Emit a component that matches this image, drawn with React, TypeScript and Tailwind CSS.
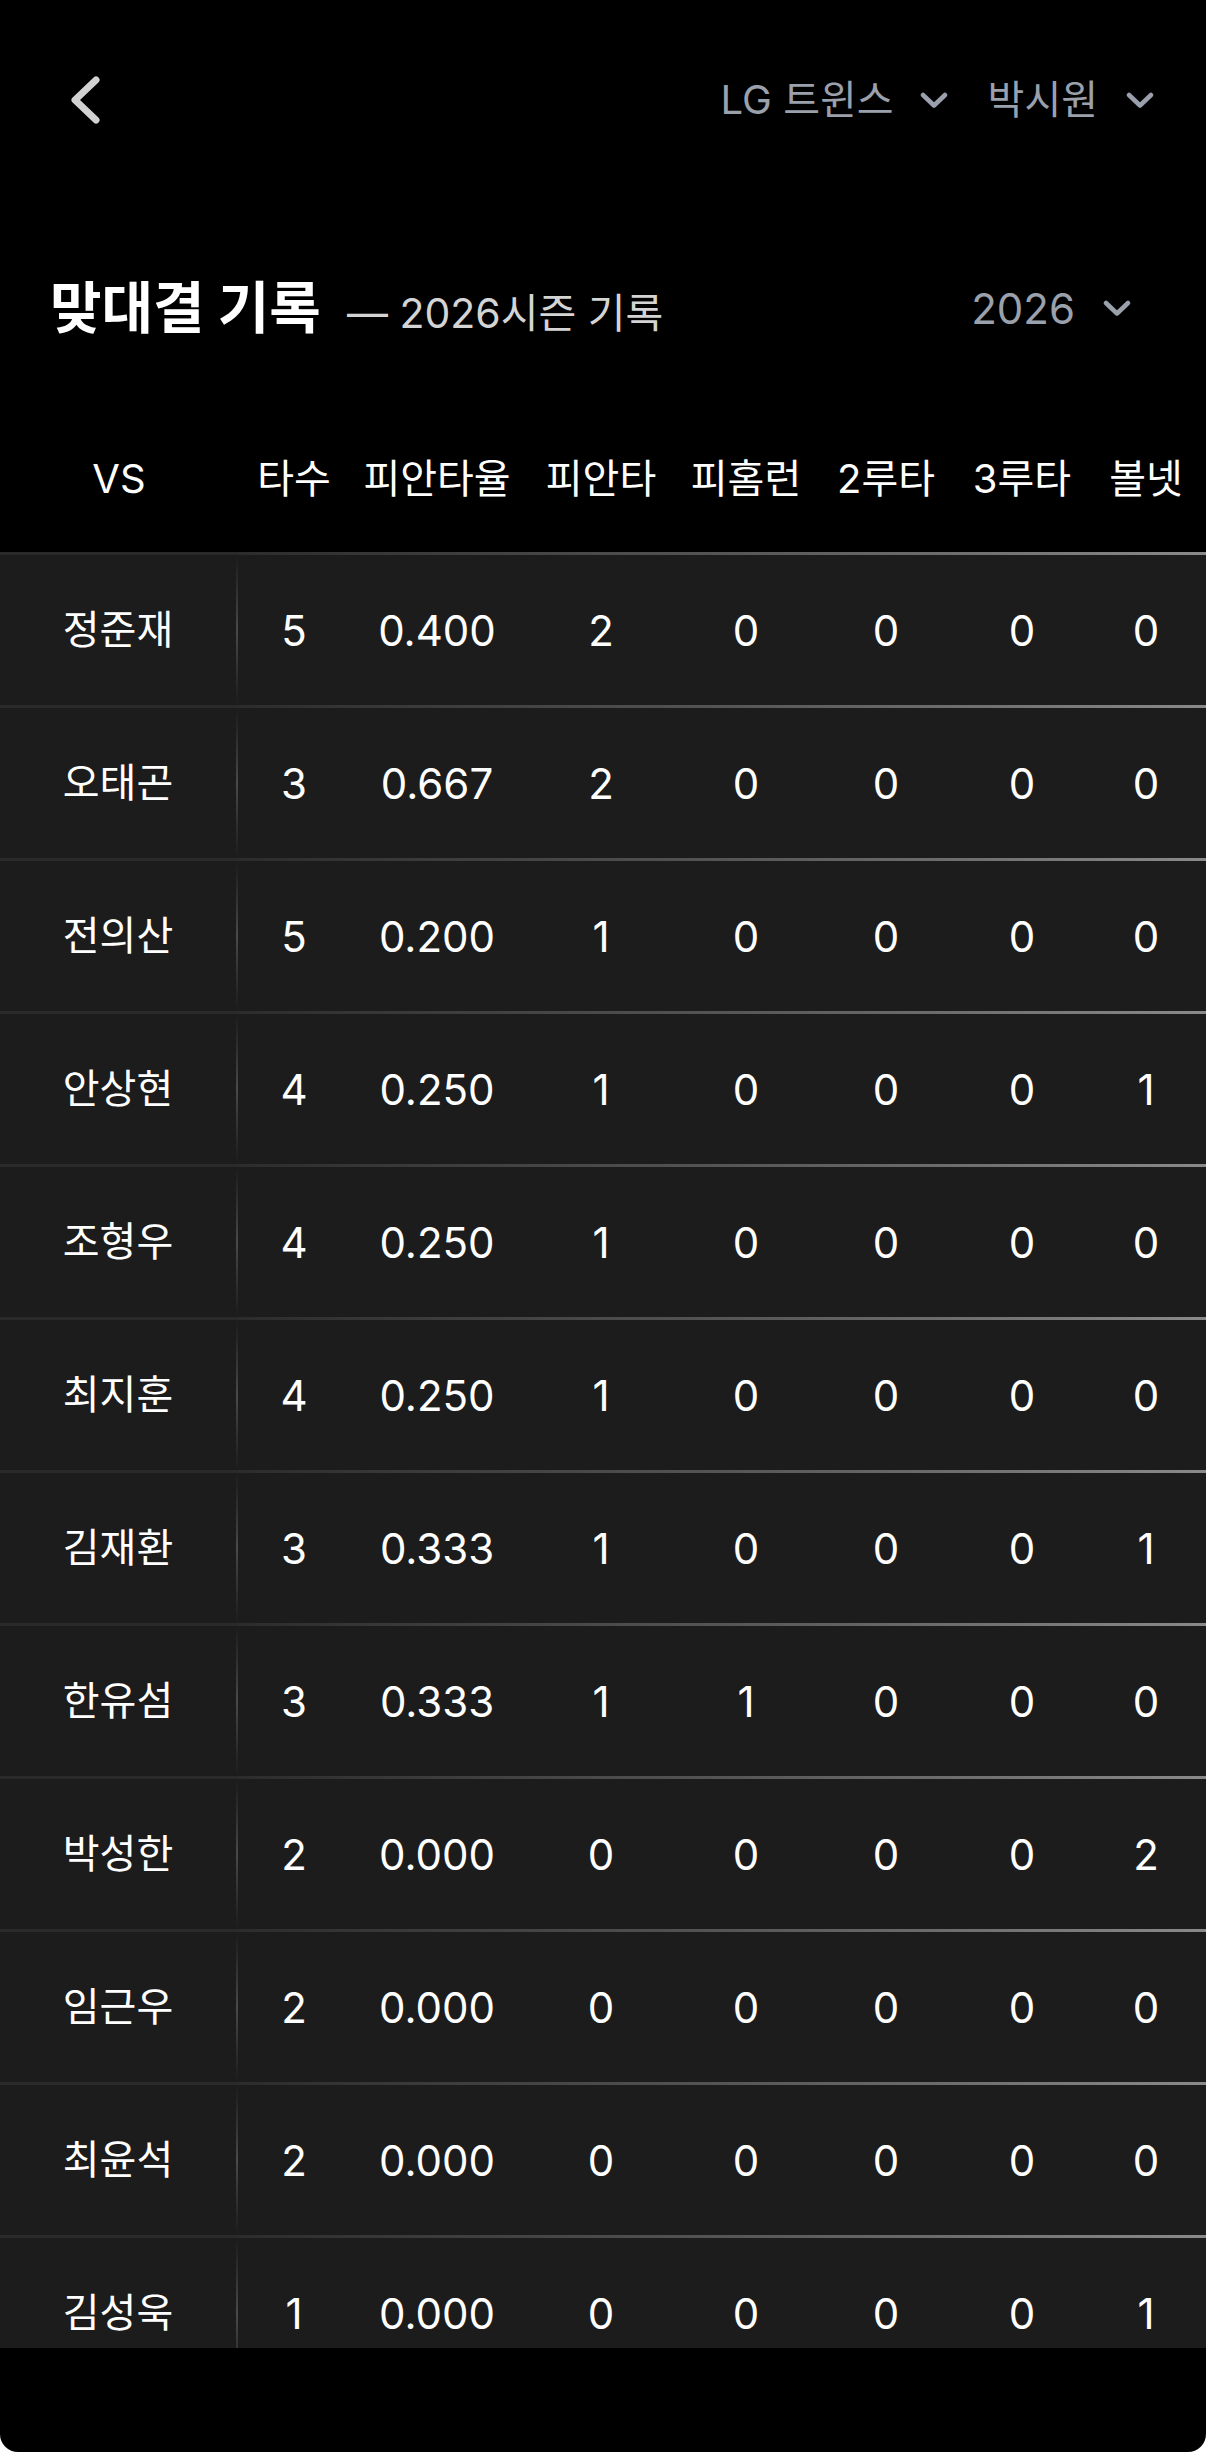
import React from "react";

type Row = {
  name: string;
  ab: number;
  avg: string;
  h: number;
  hr: number;
  b2: number;
  b3: number;
  bb: number;
};

const rows: Row[] = [
  { name: "정준재", ab: 5, avg: "0.400", h: 2, hr: 0, b2: 0, b3: 0, bb: 0 },
  { name: "오태곤", ab: 3, avg: "0.667", h: 2, hr: 0, b2: 0, b3: 0, bb: 0 },
  { name: "전의산", ab: 5, avg: "0.200", h: 1, hr: 0, b2: 0, b3: 0, bb: 0 },
  { name: "안상현", ab: 4, avg: "0.250", h: 1, hr: 0, b2: 0, b3: 0, bb: 1 },
  { name: "조형우", ab: 4, avg: "0.250", h: 1, hr: 0, b2: 0, b3: 0, bb: 0 },
  { name: "최지훈", ab: 4, avg: "0.250", h: 1, hr: 0, b2: 0, b3: 0, bb: 0 },
  { name: "김재환", ab: 3, avg: "0.333", h: 1, hr: 0, b2: 0, b3: 0, bb: 1 },
  { name: "한유섬", ab: 3, avg: "0.333", h: 1, hr: 1, b2: 0, b3: 0, bb: 0 },
  { name: "박성한", ab: 2, avg: "0.000", h: 0, hr: 0, b2: 0, b3: 0, bb: 2 },
  { name: "임근우", ab: 2, avg: "0.000", h: 0, hr: 0, b2: 0, b3: 0, bb: 0 },
  { name: "최윤석", ab: 2, avg: "0.000", h: 0, hr: 0, b2: 0, b3: 0, bb: 0 },
  { name: "김성욱", ab: 1, avg: "0.000", h: 0, hr: 0, b2: 0, b3: 0, bb: 1 },
];

const columns = ["타수", "피안타율", "피안타", "피홈런", "2루타", "3루타", "볼넷"];

const gridCols = "grid grid-cols-[238px_112px_174px_154px_136px_144px_128px_120px]";

function ChevronDown() {
  return (
    <svg width="28" height="17" viewBox="0 0 28 17" fill="none">
      <polyline
        points="3,3 14,13.5 25,3"
        stroke="#9aa0ac"
        strokeWidth="4.5"
        strokeLinecap="round"
        strokeLinejoin="round"
      />
    </svg>
  );
}

function BackArrow() {
  return (
    <svg width="34" height="50" viewBox="0 0 34 50" fill="none">
      <polyline
        points="28,5 7,25 28,45"
        stroke="#d2d2d2"
        strokeWidth="7"
        strokeLinecap="round"
        strokeLinejoin="round"
      />
    </svg>
  );
}

export default function App() {
  return (
    <div className="bg-white font-[Inter,'Noto_Sans_CJK_KR',sans-serif]">
      <div className="bg-black h-[2452px] rounded-b-[18px] overflow-hidden flex flex-col">
        {/* Top nav */}
        <div className="h-[200px] flex items-center justify-between pl-[68px] pr-[52px]">
          <button className="flex items-center">
            <BackArrow />
          </button>
          <div className="flex items-center text-[40px] text-[#9aa0ac]">
            <span>LG 트윈스</span>
            <span className="ml-[26px]">
              <ChevronDown />
            </span>
            <span className="ml-[40px]">박시원</span>
            <span className="ml-[28px]">
              <ChevronDown />
            </span>
          </div>
        </div>

        {/* Title */}
        <div className="h-[206px] pt-[10px] flex items-center justify-between pl-[50px] pr-[75px]">
          <div className="flex items-baseline gap-[26px]">
            <h1 className="text-[56px] font-bold text-white leading-none">맞대결 기록</h1>
            <span className="text-[41px] text-[#d4d4d4] leading-none">— 2026시즌 기록</span>
          </div>
          <div className="flex items-center gap-[28px] text-[42px] text-[#9aa0ac]">
            <span>2026</span>
            <ChevronDown />
          </div>
        </div>

        {/* Table header */}
        <div className={`${gridCols} h-[146px] items-center text-[40px] text-white`}>
          <div className="text-center">VS</div>
          {columns.map((c) => (
            <div key={c} className="text-center whitespace-nowrap">
              {c}
            </div>
          ))}
        </div>

        {/* Rows */}
        <div className="h-[1796px] overflow-hidden bg-[#1c1c1c]">
          {rows.map((r) => (
            <div key={r.name} className="flex flex-col">
              <div className="flex h-[3px]">
                <div className="w-[238px] bg-[#2a2a2a]" />
                <div className="flex-1 bg-linear-to-r from-[#2c2c2c] via-[#555555] to-[#8a8a8a]" />
              </div>
              <div className={`${gridCols} h-[150px] items-center text-white`}>
                <div className="flex h-full">
                  <div className="flex-1 flex items-center justify-center text-[40px]">{r.name}</div>
                  <div className="w-[2px] bg-linear-to-b from-[#1c1c1c] via-[#4a4a4a] to-[#1c1c1c]" />
                </div>
                {[r.ab, r.avg, r.h, r.hr, r.b2, r.b3, r.bb].map((v, i) => (
                  <div key={i} className="text-center text-[42px]">
                    {v}
                  </div>
                ))}
              </div>
            </div>
          ))}
        </div>
      </div>
    </div>
  );
}
